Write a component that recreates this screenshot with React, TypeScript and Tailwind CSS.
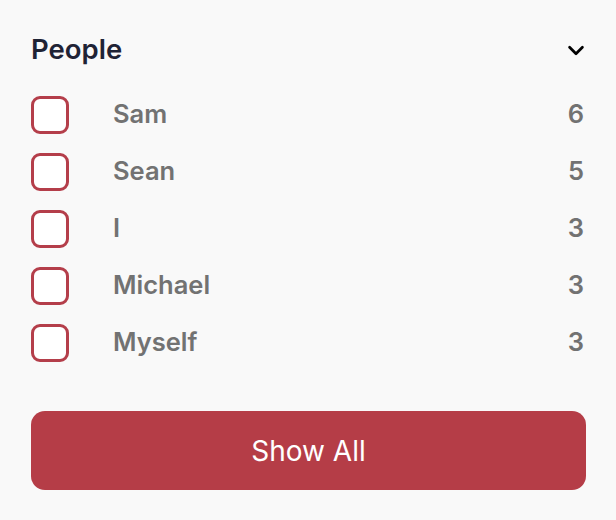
import React from 'react';

const people = [
    { name: 'Sam', count: 6 },
    { name: 'Sean', count: 5 },
    { name: 'I', count: 3 },
    { name: 'Michael', count: 3 },
    { name: 'Myself', count: 3 },
];

const App: React.FC = () => {
    return (
        <div className="w-[616px] h-[520px] bg-[#f9f9f9] px-[31px] pt-[30px] font-['Inter',sans-serif]">
            {/* Header */}
            <div className="flex items-center justify-between h-[40px]">
                <h2 className="text-[27.5px] font-semibold text-[#1f2335]">People</h2>
                <svg className="w-[22px] h-[22px] mr-[-2px] text-black" fill="none" viewBox="0 0 24 24" stroke="currentColor">
                    <path strokeLinecap="round" strokeLinejoin="round" strokeWidth={3} d="M5 9l7 7 7-7" />
                </svg>
            </div>

            {/* List */}
            <ul className="mt-[16px]">
                {people.map((p) => (
                    <li key={p.name} className="flex items-center h-[57px]">
                        <span className="w-[38px] h-[38px] rounded-[9px] border-[3.5px] border-[#b43e4a] bg-white shrink-0" />
                        <span className="ml-[44px] flex-1 text-[25.5px] font-semibold text-[#727272]">{p.name}</span>
                        <span className="text-[25.5px] font-semibold text-[#727272] pr-[1px]">{p.count}</span>
                    </li>
                ))}
            </ul>

            <button className="mt-[40px] w-[555px] h-[79px] rounded-[14px] bg-[#b53d47] text-white text-[28px] font-normal">
                Show All
            </button>
        </div>
    );
};

export default App;
